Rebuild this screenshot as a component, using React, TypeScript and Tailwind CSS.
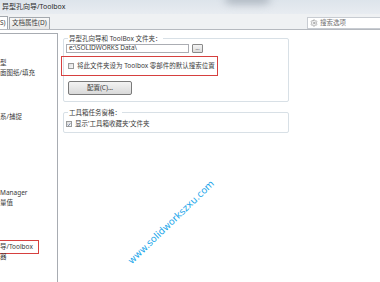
import { Settings } from 'lucide-react';

const font = { fontFamily: '"Noto Sans", "Noto Sans CJK SC", sans-serif' };

const treeItems = [
  { label: '型', mt: 'mt-[24px]' },
  { label: '面图纸/填充', mt: 'mt-0' },
  { label: '系/捕捉', mt: 'mt-[34px]' },
  { label: 'Manager', mt: 'mt-[66px]' },
  { label: '量值', mt: 'mt-0' },
  { label: '导/Toolbox', mt: 'mt-[34px]', boxed: true },
  { label: '器', mt: 'mt-0' },
];

function Check({ checked }: { checked?: boolean }) {
  return (
    <span className="flex h-[6px] w-[6px] shrink-0 items-center justify-center border border-[#9a9b9b] bg-gradient-to-br from-[#dcdcdc] to-[#fbfbfb]">
      {checked && (
        <svg viewBox="0 0 6 6" className="h-[5px] w-[5px]">
          <path d="M1 3.2 L2.4 4.6 L5 1.2" fill="none" stroke="#4a5e8a" strokeWidth="1.1" />
        </svg>
      )}
    </span>
  );
}

export default function App() {
  return (
    <div className="relative h-[282px] w-[380px] overflow-hidden bg-white text-[6.5px] text-[#3a3a3a]" style={font}>
      {/* title bar */}
      <div className="relative flex h-[14px] items-center bg-gradient-to-b from-[#dde4eb] to-[#e8ecf1] pl-[2px] text-[7px] text-[#2a2a2a]">
        异型孔向导/Toolbox
        <div className="absolute left-[225px] top-[-6px] h-[10px] w-[45px] rounded-full bg-[#8d97a3] opacity-60 blur-[4px]" />
      </div>

      {/* tab strip */}
      <div className="flex h-[16px] items-end border-b border-[#b5b9bf] bg-[#eff1f3]">
        <div className="flex h-[13px] w-[8px] items-center border-r border-t border-[#a3a8ae] bg-white leading-none">S)</div>
        <div className="ml-[1px] flex h-[12px] items-center border border-b-0 border-[#a3a8ae] bg-gradient-to-b from-[#f7f7f7] to-[#e6e6e6] px-[2px] leading-none">
          文档属性(D)
        </div>
        <div className="mb-[1px] ml-auto mt-[3px] flex h-[12px] w-[73px] items-center gap-[2px] self-start border border-r-0 border-[#c8ccd2] bg-white pl-[2px] text-[#707070]">
          <Settings size={8} strokeWidth={1.5} className="text-[#707070]" />
          搜索选项
        </div>
      </div>

      {/* content */}
      <div className="flex h-[252px] pt-[3px]">
        <div className="flex w-[58px] flex-col border-r border-t border-[#a8acb2]">
          {treeItems.map((it) => (
            <div key={it.label} className={`${it.mt} flex h-[10px] items-center leading-none`}>
              {it.boxed ? (
                <span className="flex h-[14px] w-[39px] items-center border-[1.5px] border-l-0 border-[#d6403f]">{it.label}</span>
              ) : (
                it.label
              )}
            </div>
          ))}
        </div>

        <div className="flex w-[231px] flex-col pl-[5px] pt-[5px]">
          {/* group 1 */}
          <div className="relative rounded-[2px] border border-[#d8e0e6] px-[2px] pb-[6px] pt-[5px]">
            <span className="absolute left-[4px] top-[-5px] bg-white px-[1px] leading-[9px]">异型孔向导和 ToolBox 文件夹：</span>
            <div className="flex items-center gap-[3px]">
              <div className="flex h-[9px] w-[123px] items-center border border-[#abadb3] bg-white pl-[2px] leading-none">
                e:\SOLIDWORKS Data\
              </div>
              <div className="flex h-[9px] w-[11px] items-center justify-center rounded-[1px] border border-[#8a8a8a] bg-gradient-to-b from-[#f4f4f4] to-[#dcdcdc] text-[5px] leading-none">
                ...
              </div>
            </div>
            <div className="-ml-[5px] mt-[3px] flex h-[20px] w-[157px] items-center gap-[3px] border-[1.5px] border-[#d6403f] pl-[6px]">
              <Check />
              <span className="leading-none">将此文件夹设为 Toolbox 零部件的默认搜索位置</span>
            </div>
            <div className="ml-[2px] mt-[5px] flex h-[14px] w-[64px] items-center justify-center rounded-[2px] border border-[#7a7a7a] bg-gradient-to-b from-[#f3f3f3] to-[#d9d9d9] leading-none">
              配置(C)...
            </div>
          </div>

          {/* group 2 */}
          <div className="relative mt-[10px] flex h-[21px] items-center gap-[3px] rounded-[2px] border border-[#d8e0e6] pl-[2px] pt-[3px]">
            <span className="absolute left-[4px] top-[-5px] bg-white px-[1px] leading-[9px]">工具箱任务窗格：</span>
            <Check checked />
            <span className="leading-none">显示'工具箱收藏夹'文件夹</span>
          </div>
        </div>
      </div>

      {/* watermark */}
      <span
        className="absolute left-[171px] top-[222px] -translate-x-1/2 -translate-y-1/2 -rotate-[44deg] whitespace-nowrap text-[9.5px] leading-none text-[#22a6ea]"
        style={{ fontFamily: '"DejaVu Sans", sans-serif' }}
      >
        www.solidworkszxu.com
      </span>
    </div>
  );
}
